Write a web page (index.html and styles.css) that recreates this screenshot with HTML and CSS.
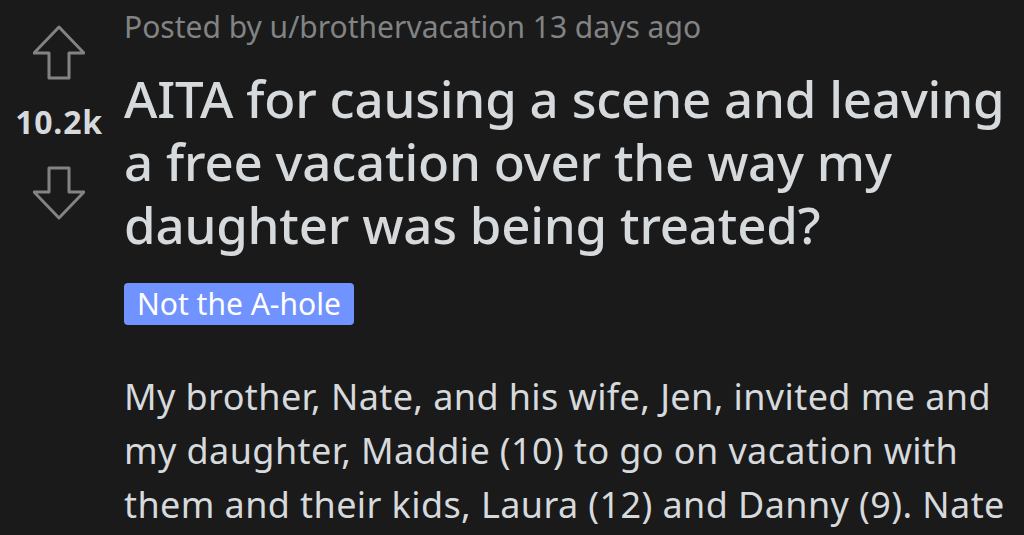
FILE: index.html
```html
<!DOCTYPE html>
<html lang="en">
<head>
<meta charset="utf-8">
<title>AITA post</title>
<link rel="stylesheet" href="styles.css">
</head>
<body>
<div class="post">
  <div class="votes">
    <svg class="arrow up" width="52" height="56" viewBox="0 0 52 56"><path d="M26 2 L51 28 L36 28 L36 53 L16 53 L16 28 L1 28 Z"/></svg>
    <div class="score">10.2k</div>
    <svg class="arrow down" width="52" height="56" viewBox="0 0 52 56"><path d="M16 2 L36 2 L36 26 L51 26 L26 52 L1 26 L16 26 Z"/></svg>
  </div>
  <div class="content">
    <div class="meta">Posted by u/brothervacation 13 days ago</div>
    <h1 class="title">AITA for causing a scene and leaving a free vacation over the way my daughter was being treated?</h1>
    <span class="flair">Not the A-hole</span>
    <p class="body">My brother, Nate, and his wife, Jen, invited me and my daughter, Maddie (10) to go on vacation with them and their kids, Laura (12) and Danny (9). Nate</p>
  </div>
</div>
</body>
</html>
```

FILE: styles.css
```css
html, body {
  margin: 0;
  padding: 0;
  background: #1a1a1b;
  overflow: hidden;
}
.post {
  display: flex;
  height: 535px;
  overflow: hidden;
}
.votes {
  width: 118px;
  flex: 0 0 118px;
  display: flex;
  flex-direction: column;
  align-items: center;
}
.arrow {
  display: block;
  fill: none;
  stroke: #818384;
  stroke-width: 3;
  stroke-linejoin: round;
}
.arrow.up {
  margin-top: 25px;
}
.score {
  font-family: "Noto Sans", sans-serif;
  font-weight: 700;
  font-size: 32px;
  line-height: 40px;
  color: #d7dadc;
  margin-top: 21px;
  letter-spacing: 0.8px;
}
.arrow.down {
  margin-top: 24px;
}
.content {
  padding-left: 6px;
  flex: 1;
  min-width: 0;
}
.meta {
  font-family: "Noto Sans", sans-serif;
  font-size: 30px;
  line-height: 40px;
  color: #818384;
  margin-top: 7px;
  white-space: nowrap;
}
.title {
  font-family: "Noto Sans", sans-serif;
  font-weight: 500;
  font-size: 51px;
  line-height: 63px;
  letter-spacing: -0.2px;
  color: #d7dadc;
  margin: 20px 0 0 0;
  width: 890px;
}
.flair {
  display: inline-block;
  margin-top: 27px;
  background: #7193ff;
  color: #ffffff;
  font-family: "Noto Sans", sans-serif;
  font-size: 30px;
  line-height: 42px;
  height: 42px;
  padding: 0 13px;
  border-radius: 4px;
}
.body {
  font-family: "Noto Sans", sans-serif;
  font-size: 36px;
  line-height: 54px;
  letter-spacing: 0.4px;
  color: #d7dadc;
  margin: 45px 0 0 0;
  width: 895px;
}
```
